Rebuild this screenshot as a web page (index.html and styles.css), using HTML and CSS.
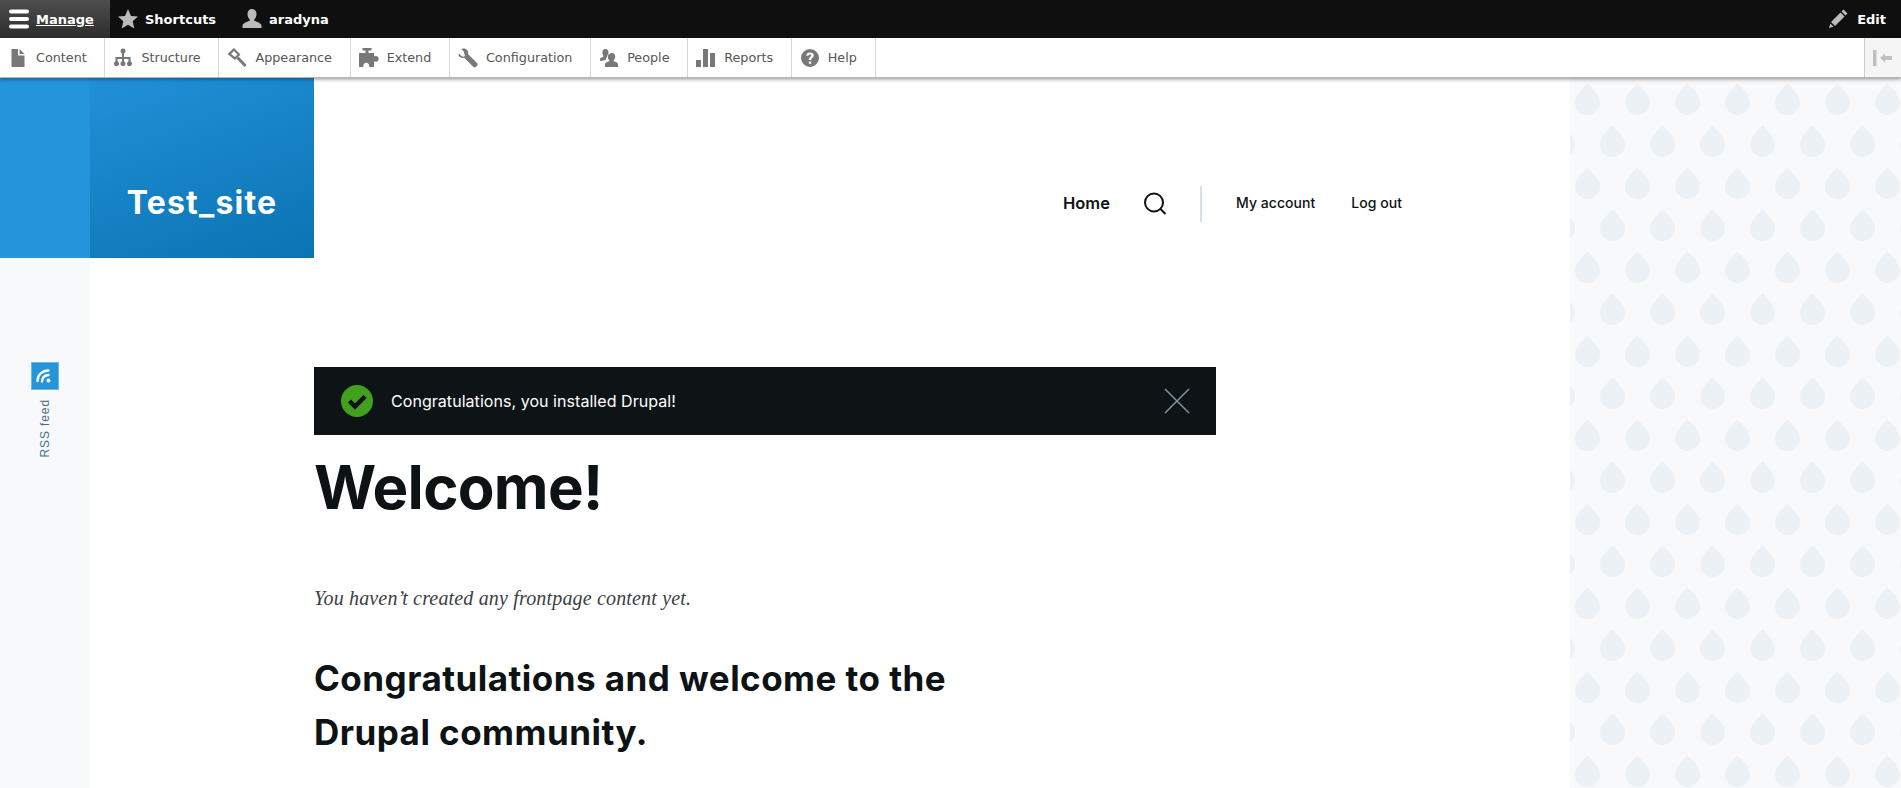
FILE: index.html
```html
<!DOCTYPE html>
<html lang="en">
<head>
    <meta charset="UTF-8">
    <title>Welcome! | Test_site</title>
    <link rel="stylesheet" href="styles.css">
</head>
<body>
<div class="toolbar">
    <div class="topBar">
        <a class="topTab manageTab" href="#">
            <svg class="topIcon" viewBox="0 0 20 20" width="20" height="20"><path fill="none" stroke="#fff" stroke-width="4" stroke-linecap="round" d="M2 2.500h16M2 10h16M2 17.500h16"/></svg>
            <span class="manageText">Manage</span>
        </a>
        <a class="topTab" href="#">
            <svg class="topIcon" viewBox="0 0 20 20" width="20" height="20"><path fill="#bbb" d="M10 0l3 7 7 .6-5.300 4.700 1.600 7.100L10 15.700l-6.300 3.700 1.600-7.100L0 7.600 7 7z"/></svg>
            <span>Shortcuts</span>
        </a>
        <a class="topTab userTab" href="#">
            <svg class="topIcon" viewBox="0 0 20 20" width="20" height="20"><path fill="#bbb" d="M10 0c2.800 0 4.500 2.100 4.500 5 0 2.300-1 4.400-2.200 5.400v1.300c2 .8 7.200 2.500 7.200 4.800V19H.5v-2.500c0-2.300 5.200-4 7.200-4.800v-1.300C6.500 9.400 5.500 7.300 5.500 5 5.500 2.100 7.200 0 10 0z"/></svg>
            <span>aradyna</span>
        </a>
        <a class="topTab editTab" href="#">
            <svg class="topIcon" viewBox="0 0 20 20" width="20" height="20"><path fill="#bbb" d="M15.500 .5l4 4-2 2-4-4zM12.500 3.500l4 4-9.500 9.500-4-4zM2.300 14.500l3.200 3.200-4.500 1.300z"/></svg>
            <span>Edit</span>
        </a>
    </div>
    <div class="tray">
        <a class="trayTab" href="#">
            <svg class="trayIcon" viewBox="0 0 20 20" width="20" height="20"><path fill="#787878" d="M3.500 1H10v6.500h6.500V19h-13zM11.500 1l5 5h-5z"/></svg>
            Content
        </a>
        <a class="trayTab" href="#">
            <svg class="trayIcon" viewBox="0 0 20 20" width="20" height="20"><path fill="#787878" d="M7.500 3a2.500 2.500 0 1 1 3.500 2.300V9h6.500v4.300a2.500 2.500 0 1 1-2 0V11H11v2.300a2.500 2.500 0 1 1-2 0V11H4.500v2.300a2.500 2.500 0 1 1-2 0V9H9V5.300A2.500 2.500 0 0 1 7.500 3z"/></svg>
            Structure
        </a>
        <a class="trayTab" href="#">
            <svg class="trayIcon" viewBox="0 0 20 20" width="20" height="20"><path fill="#787878" fill-rule="evenodd" d="M7 0l6.500 6.500-5.500 5.500L.5 6zM7 3L4 6l4 3 2.500-2.500z"/><path stroke="#787878" stroke-width="3" d="M10.500 9.500l8 8.500"/></svg>
            Appearance
        </a>
        <a class="trayTab" href="#">
            <svg class="trayIcon" viewBox="0 0 20 20" width="20" height="20"><path fill="#787878" d="M3.500 0h9v2.500H9.500V5H15v3.200h1a2.800 2.800 0 1 1 0 5.300h-1V19H10a3 3 0 1 0-5.500 0H0V5h6.500V2.500h-3z"/></svg>
            Extend
        </a>
        <a class="trayTab" href="#">
            <svg class="trayIcon" viewBox="0 0 20 20" width="20" height="20"><path fill="#787878" d="M1 5.500L3.500 8c1 1 2.500.8 3.500 0L5.500 3 3 1c2-1 4.800-.8 6.200 1 1 1.300 1.200 2.700.8 4l9 9c.8.800.8 2 0 2.800l-1 1c-.8.800-2 .8-2.800 0l-9-9c-1.500.5-3.300.2-4.500-1C.5 8.600.5 7 1 5.500z"/></svg>
            Configuration
        </a>
        <a class="trayTab" href="#">
            <svg class="trayIcon" viewBox="0 0 20 20" width="20" height="20"><path fill="#787878" d="M6.500 1c2 0 3 1.500 3 3.300 0 1.200-.4 2.300-1 3l-2 4.700c-1 .4-2.500.8-5.500 1v-2c0-1 2.500-1.800 3.300-2.200v-.8C3.800 7.300 3.400 5.700 3.400 4.300 3.400 2.500 4.500 1 6.500 1zM13 5c2 0 3.200 1.600 3.200 3.400 0 1.500-.6 3-1.500 3.800v1c.9.300 4.300 1.200 4.300 2.800V19H6v-3c0-1.600 3.400-2.500 4.300-2.800v-1c-.9-.8-1.500-2.300-1.500-3.800C8.800 6.600 11 5 13 5z"/></svg>
            People
        </a>
        <a class="trayTab" href="#">
            <svg class="trayIcon" viewBox="0 0 20 20" width="20" height="20"><path fill="#787878" d="M0 12h5v7H0zM7 1h5v18H7zM14 5h5v14h-5z"/></svg>
            Reports
        </a>
        <a class="trayTab" href="#">
            <svg class="trayIcon" viewBox="0 0 20 20" width="20" height="20"><path fill="#787878" fill-rule="evenodd" d="M10 1a9 9 0 1 1 0 18 9 9 0 0 1 0-18zM8.800 13.500v2.300h2.400v-2.300zM10 4.500c-2.200 0-3.600 1.200-3.800 3.200h2.300c.1-.8.600-1.200 1.400-1.200.8 0 1.300.4 1.300 1.100 0 .6-.4.900-1 1.400-1 .8-1.400 1.400-1.400 2.800V12h2.400v-.4c0-.7.200-1 1-1.600.9-.7 1.500-1.400 1.500-2.600 0-1.900-1.500-2.900-3.700-2.900z"/></svg>
            Help
        </a>
        <div class="trayToggle">
            <svg viewBox="0 0 20 16" width="20" height="16"><path fill="#bfbfbf" d="M0 0h3.500v16H0zM7 8l5-4.500V6h7v4h-7v2.500z"/></svg>
        </div>
    </div>
</div>

<div class="page">
    <aside class="social">
        <div class="socialTop"></div>
        <div class="feed">
            <a class="feedIcon" href="#">
                <svg viewBox="0 0 20 20" width="20" height="20"><path fill="none" stroke="#fff" stroke-width="2.400" stroke-linecap="round" d="M2.500 15C2.500 9 7 4.500 13.500 4.500M7 15.500c0-3.500 2.500-6.500 6.500-6.500"/><circle cx="13.500" cy="14.500" r="2" fill="#fff"/></svg>
            </a>
            <span class="feedText">RSS feed</span>
        </div>
    </aside>

    <div class="center">
        <header class="siteHeader">
            <a class="branding" href="#">Test_site</a>
            <nav class="mainNav">
                <a class="navHome" href="#">Home</a>
                <svg class="navSearch" viewBox="0 0 24 24" width="24" height="24"><circle cx="11" cy="10.500" r="9" fill="none" stroke="#0d1214" stroke-width="2"/><path d="M17.500 17l5 5" stroke="#0d1214" stroke-width="2" fill="none"/></svg>
                <div class="navLine"></div>
                <a class="navLink" href="#">My account</a>
                <a class="navLink" href="#">Log out</a>
            </nav>
        </header>
        <main class="content">
            <div class="message">
                <svg class="messageIcon" viewBox="0 0 32 32" width="32" height="32"><circle cx="16" cy="16" r="16" fill="#42a01f"/><path d="M8.500 16l5.500 5.500 10-10" fill="none" stroke="#0e1316" stroke-width="4.500"/></svg>
                <span class="messageText">Congratulations, you installed Drupal!</span>
                <svg class="messageClose" viewBox="0 0 26 26" width="26" height="26"><path d="M1 1l24 24M25 1L1 25" stroke="#7e96a7" stroke-width="1.500"/></svg>
            </div>
            <h1>Welcome!</h1>
            <p class="empty">You haven’t created any frontpage content yet.</p>
            <h2>Congratulations and welcome to the Drupal community.</h2>
        </main>
    </div>

    <svg class="drops" width="331" height="710">
        <defs>
            <pattern id="drop" width="50" height="84" patternUnits="userSpaceOnUse">
                <path fill="#ecf1f5" d="M17.500 5c2.500 4 12.500 11 12.500 19.500a12.500 12.500 0 0 1-25 0C5 16 15 9 17.500 5z"/>
                <path fill="#ecf1f5" d="M42.500 47c2.500 4 12.500 11 12.500 19.500a12.500 12.500 0 0 1-25 0C30 58 40 51 42.500 47z"/>
                <path fill="#ecf1f5" d="M-7.500 47c2.500 4 12.500 11 12.500 19.500a12.500 12.500 0 0 1-25 0C-20 58-10 51-7.500 47z"/>
            </pattern>
        </defs>
        <rect width="331" height="710" fill="#f7f9fb"/>
        <rect width="331" height="710" fill="url(#drop)"/>
    </svg>
</div>
</body>
</html>
```

FILE: styles.css
```css
*{
    box-sizing: border-box;
}
html,body{
    margin:0px;
    padding:0px;
    height:788px;
    overflow: hidden;
    background-color: #fff;
}
a{
    text-decoration: none;
    color: inherit;
}
.toolbar{
    position: relative;
    z-index: 2;
    font-family: "DejaVu Sans", sans-serif;
    font-size: 13px;
    box-shadow: 0 1px 4px rgba(0,0,0,0.45);
}
.topBar{
    display: flex;
    height: 38px;
    background-color: #0f0f0f;
    color: #fff;
    font-weight: bold;
}
.topTab{
    display: flex;
    align-items: center;
    gap: 7px;
    padding: 0 20px 0 8px;
}
.manageTab{
    width: 110px;
    padding-left: 9px;
    background-image: linear-gradient(#4e4e4e, #2c2c2c);
}
.manageText{
    text-decoration: underline;
}
.userTab{
    padding-left: 6px;
}
.editTab{
    margin-left: auto;
    padding: 0 15px 0 0;
    gap: 9px;
}
.topIcon{
    flex: none;
}
.tray{
    display: flex;
    height: 40px;
    background-color: #fff;
    border-bottom: 1px solid #b5b5b5;
    color: #565656;
    font-size: 12.75px;
}
.trayTab{
    display: flex;
    align-items: center;
    gap: 8px;
    padding: 0 17.7px 0 8px;
    border-right: 1px solid #d9d9d9;
}
.trayIcon{
    flex: none;
}
.trayToggle{
    margin-left: auto;
    width: 37px;
    display: flex;
    align-items: center;
    justify-content: center;
    background-color: #f5f5f5;
    border-left: 1px solid #ccc;
}
.page{
    display: grid;
    grid-template-columns: 90px 1480px 331px;
    height: 710px;
}
.social{
    background-color: #f7f9fb;
}
.socialTop{
    height: 180px;
    background-color: #2494db;
}
.feed{
    display: flex;
    flex-direction: column;
    align-items: center;
    padding-top: 104px;
    gap: 9px;
}
.feedIcon{
    display: flex;
    align-items: center;
    justify-content: center;
    width: 28px;
    height: 28px;
    background-color: #2494db;
    border: 1px solid #6cb6e6;
}
.feedText{
    writing-mode: vertical-rl;
    transform: rotate(180deg);
    font-family: "Liberation Sans", sans-serif;
    font-size: 12px;
    letter-spacing: 0.9px;
    color: #4a6f8c;
}
.center{
    overflow: hidden;
}
.siteHeader{
    display: flex;
    height: 180px;
    font-family: Inter, sans-serif;
}
.branding{
    display: flex;
    align-items: flex-end;
    justify-content: center;
    width: 224px;
    padding-bottom: 36px;
    background-image: linear-gradient(160deg, #2290d8, #0a74b3);
    color: #fff;
    font-size: 32px;
    font-weight: 700;
    letter-spacing: 1.2px;
}
.mainNav{
    display: flex;
    align-items: center;
    padding: 72px 0 0 749px;
    color: #0d1214;
}
.navHome{
    font-size: 16.5px;
    font-weight: 600;
    margin-bottom: 2px;
}
.navSearch{
    margin-left: 33px;
    margin-bottom: 1px;
}
.navLine{
    width: 2px;
    height: 36px;
    margin: 0 34px 0 33px;
    background-color: #d3e0ea;
}
.navLink{
    font-size: 14px;
    font-weight: 500;
    margin-right: 36px;
    margin-bottom: 4px;
    letter-spacing: 0.05px;
}
.content{
    padding: 109px 0 0 224px;
    font-family: Inter, sans-serif;
    color: #0d1214;
}
.message{
    display: flex;
    align-items: center;
    width: 902px;
    height: 68px;
    padding: 0 26px 0 27px;
    background-color: #0e1316;
    color: #fff;
}
.messageText{
    margin-left: 18px;
    font-size: 16px;
    letter-spacing: 0.05px;
}
.messageClose{
    margin-left: auto;
}
h1{
    margin: 12px 0 0;
    font-size: 60px;
    line-height: 80px;
    font-weight: 700;
    letter-spacing: -0.7px;
}
.empty{
    margin: 56px 0 0;
    font-family: "Liberation Serif", serif;
    font-style: italic;
    font-size: 20px;
    line-height: 30px;
    letter-spacing: 0.17px;
    color: #3b4044;
}
h2{
    width: 680px;
    margin: 38px 0 0;
    font-size: 35px;
    line-height: 54px;
    font-weight: 700;
    letter-spacing: 0.47px;
}
.drops{
    display: block;
}
```
